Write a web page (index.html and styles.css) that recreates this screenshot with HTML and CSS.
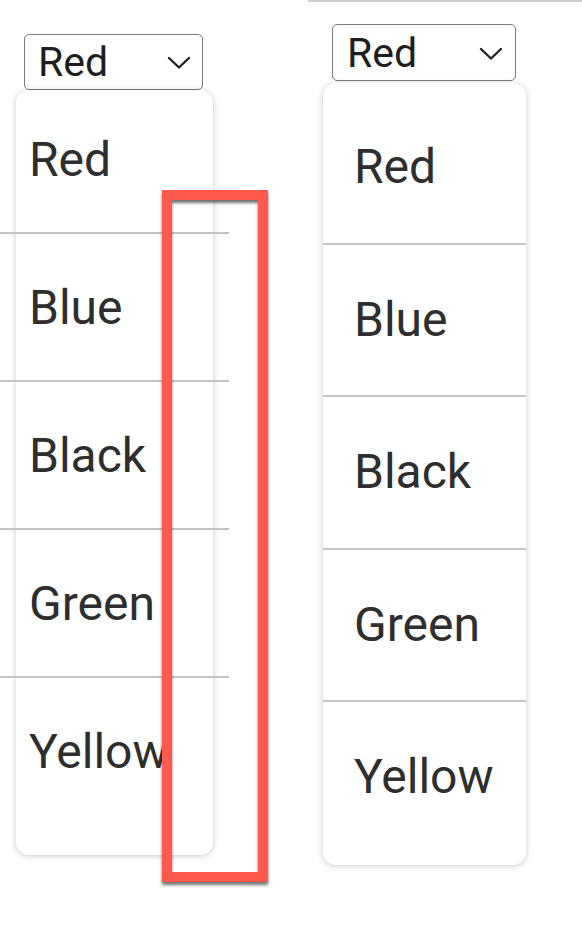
FILE: index.html
```html
<!DOCTYPE html>
<html>
<head>
<meta charset="utf-8">
<link rel="stylesheet" href="styles.css">
</head>
<body>
<div class="page">
  <section class="panel panel-left">
    <div class="select">
      <span class="select-value">Red</span>
      <svg class="chev" width="24" height="14" viewBox="0 0 24 14"><polyline points="2,2 12,11.5 22,2" fill="none" stroke="#222" stroke-width="2.4" stroke-linecap="round" stroke-linejoin="round"/></svg>
    </div>
    <div class="card">
      <ul class="list">
        <li class="item">Red</li>
        <li class="item">Blue</li>
        <li class="item">Black</li>
        <li class="item">Green</li>
        <li class="item">Yellow</li>
      </ul>
    </div>
  </section>
  <section class="panel panel-right">
    <div class="select">
      <span class="select-value">Red</span>
      <svg class="chev" width="24" height="14" viewBox="0 0 24 14"><polyline points="2,2 12,11.5 22,2" fill="none" stroke="#222" stroke-width="2.4" stroke-linecap="round" stroke-linejoin="round"/></svg>
    </div>
    <div class="card">
      <ul class="list">
        <li class="item">Red</li>
        <li class="item">Blue</li>
        <li class="item">Black</li>
        <li class="item">Green</li>
        <li class="item">Yellow</li>
      </ul>
    </div>
  </section>
</div>
<div class="highlight"></div>
</body>
</html>
```

FILE: styles.css
```css
* { box-sizing: border-box; }
html, body {
  margin: 0;
  padding: 0;
  background: #fff;
}
body {
  font-family: Roboto, "Noto Sans", Arial, sans-serif;
  color: #2e2e2e;
  width: 582px;
  height: 928px;
  overflow: hidden;
  position: relative;
}
.page {
  display: flex;
  align-items: flex-start;
}
.panel {
  display: flex;
  flex-direction: column;
  align-items: flex-start;
}
.panel-left {
  width: 308px;
}
.panel-right {
  width: 274px;
  border-top: 2px solid #cfcfcf;
}
.select {
  display: flex;
  align-items: center;
  justify-content: space-between;
  border: 1.5px solid #7a7a7a;
  border-radius: 5px;
  background: #fff;
  font-size: 41px;
  line-height: 48px;
  color: #1e1e1e;
}
.panel-left .select {
  width: 179px;
  height: 56px;
  margin: 34px 0 0 24px;
  padding: 0 11px 0 13px;
}
.panel-right .select {
  width: 184px;
  height: 57px;
  margin: 22px 0 0 24px;
  padding: 0 12px 0 14px;
}
.chev { display: block; margin-top: 2px; }
.card {
  background: #fff;
  border-radius: 13px;
  box-shadow: 0 1px 6px rgba(0, 0, 0, 0.22);
}
.panel-left .card {
  width: 197px;
  margin-left: 16px;
  padding-bottom: 29px;
}
.panel-right .card {
  width: 203px;
  margin: 2px 0 0 15px;
  padding: 9px 0 10px;
}
.list {
  list-style: none;
  margin: 0;
  padding: 0;
}
.item {
  font-size: 48px;
  line-height: 56px;
  border-bottom: 2px solid #c4c4c4;
  white-space: nowrap;
}
.item:last-child { border-bottom: none; }
.panel-left .list { margin: -4px 0 0 -16px; width: 229px; }
.panel-left .item {
  height: 148px;
  padding: 46px 0 0 29px;
}
.panel-right .item {
  height: 152.5px;
  padding: 47px 0 0 31px;
}
.highlight {
  position: absolute;
  left: 162px;
  top: 190px;
  width: 106px;
  height: 692px;
  border: 10px solid #fd5a4d;
  box-shadow: 0 3px 3px rgba(0, 0, 0, 0.55), inset 0 3px 3px rgba(0, 0, 0, 0.55);
}
```
